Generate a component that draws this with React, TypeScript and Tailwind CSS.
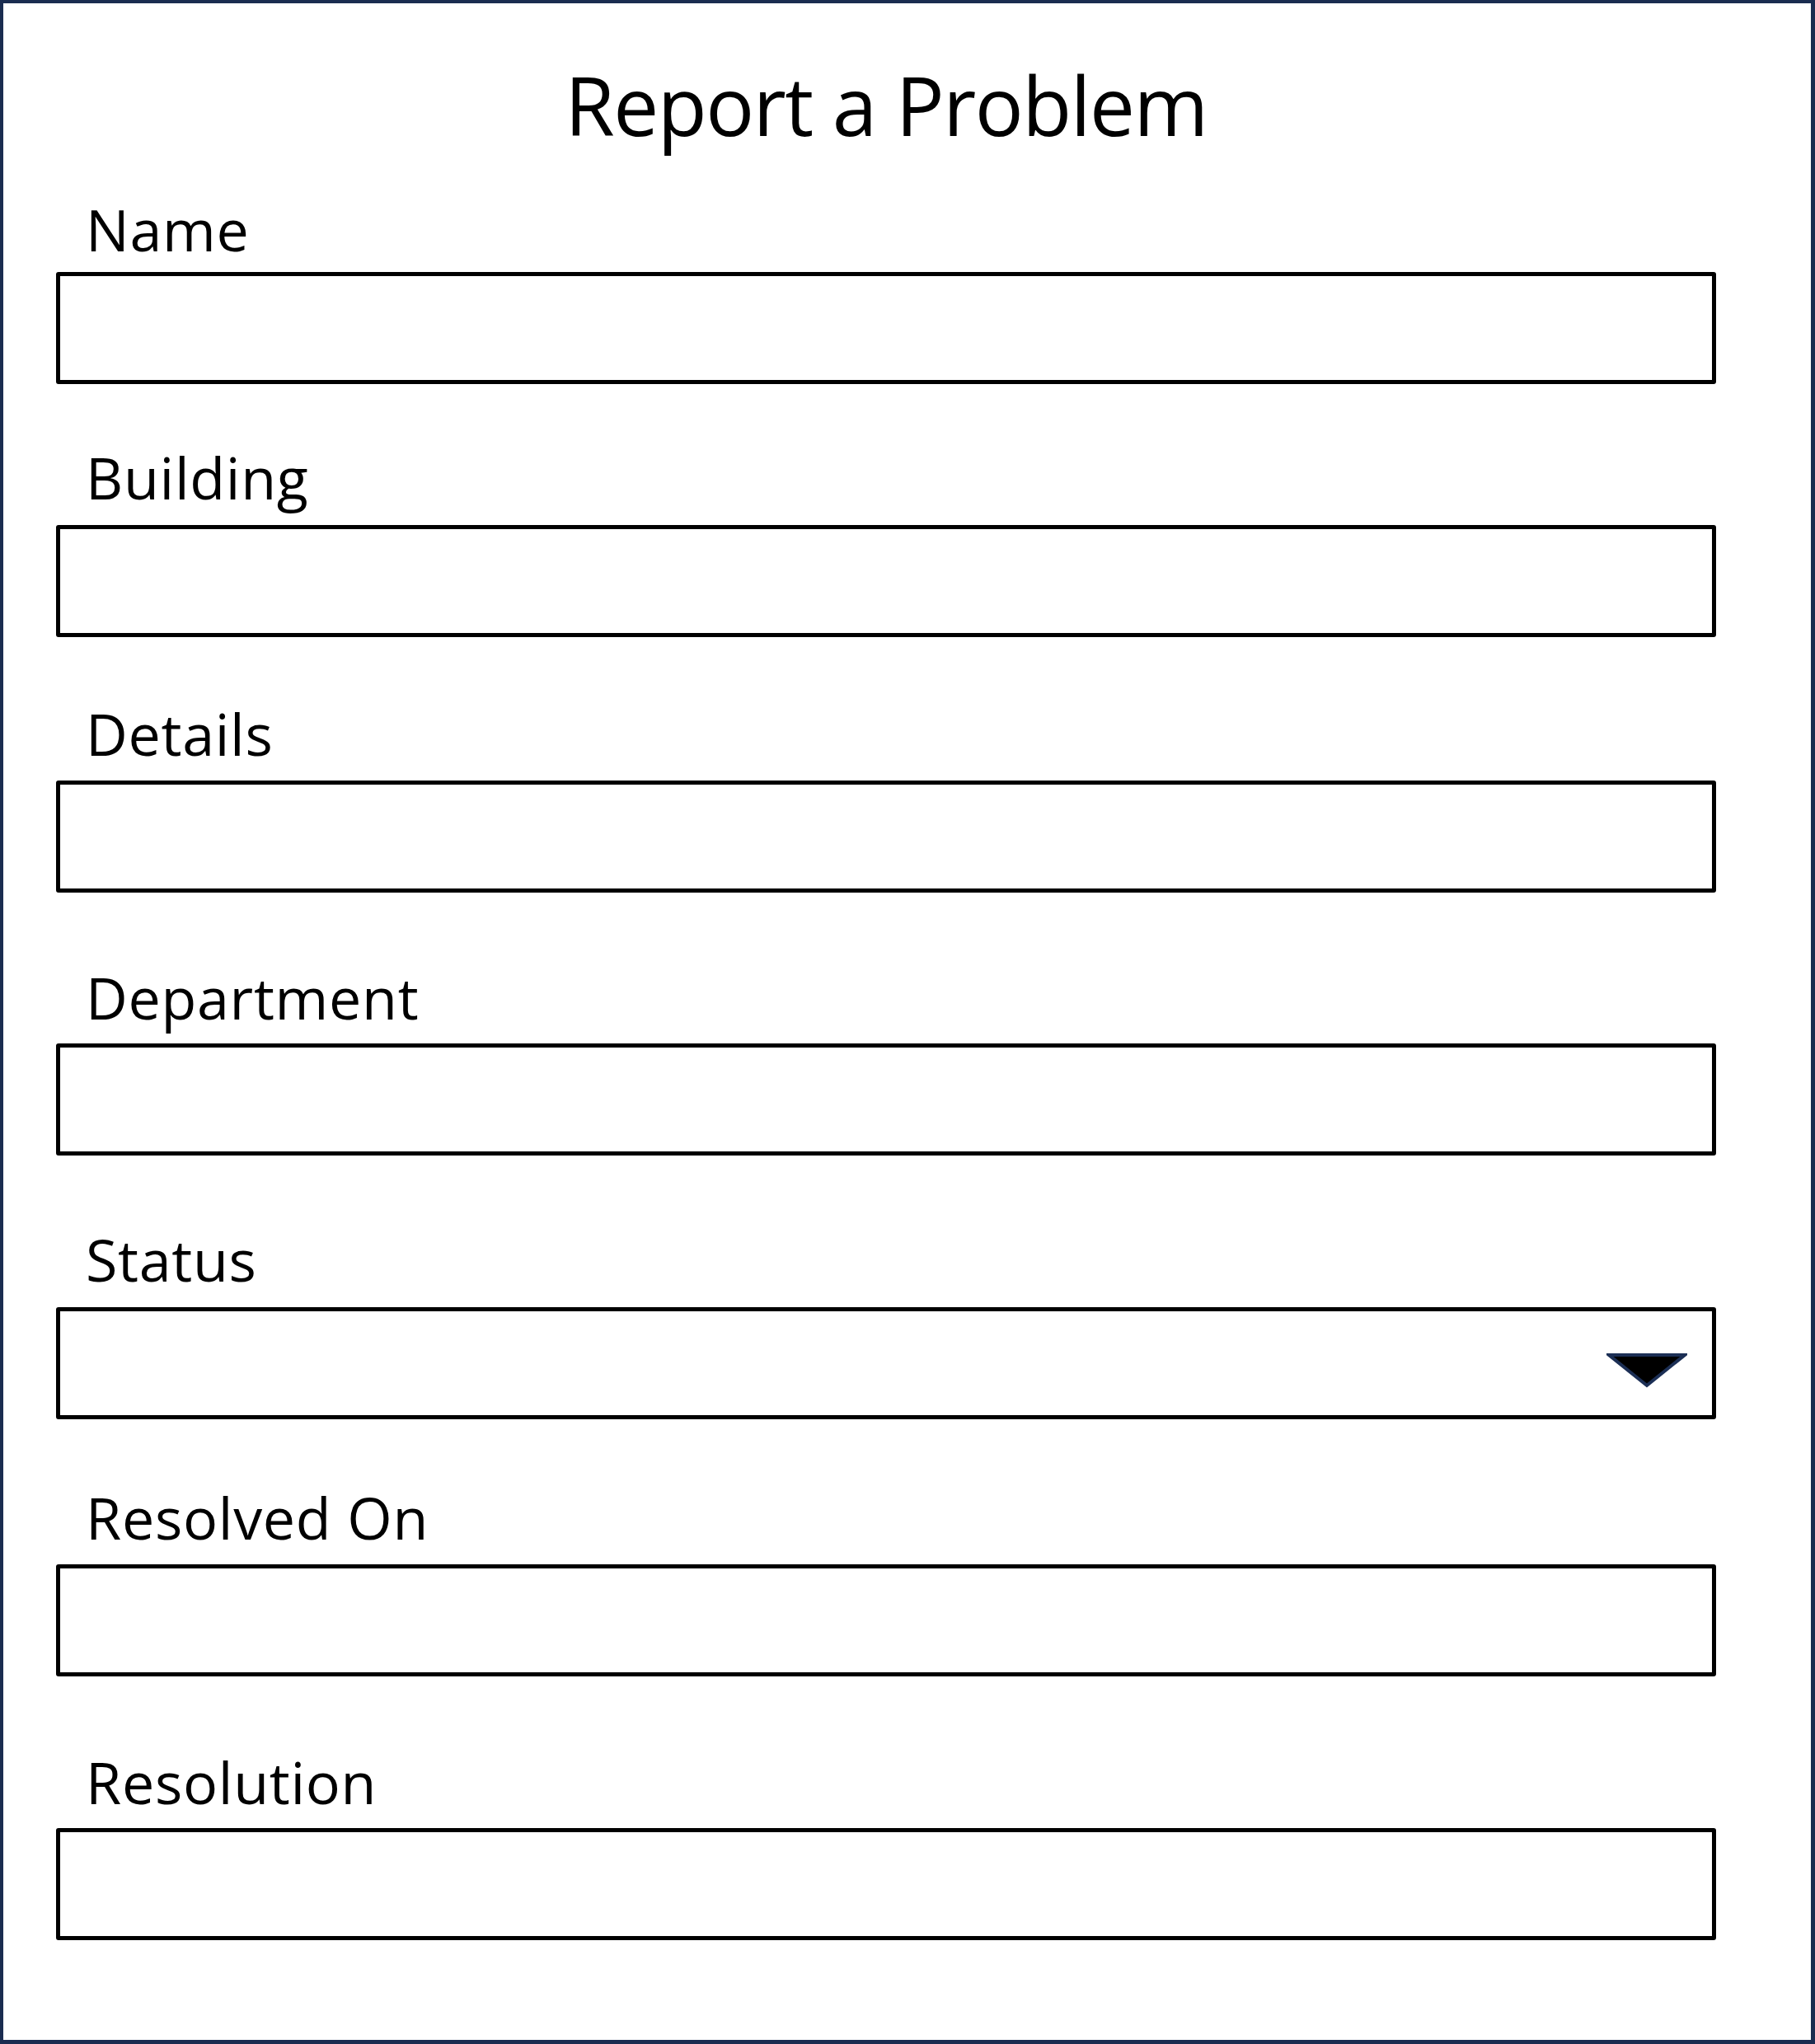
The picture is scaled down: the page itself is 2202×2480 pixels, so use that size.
const fields = [
  { label: "Name", top: "mt-[67px]", gap: "mt-[17px]" },
  { label: "Building", top: "mt-[78px]", gap: "mt-[23px]" },
  { label: "Details", top: "mt-[82px]", gap: "mt-[22px]" },
  { label: "Department", top: "mt-[92px]", gap: "mt-[21px]" },
  { label: "Status", top: "mt-[91px]", gap: "mt-[23px]", select: true },
  { label: "Resolved On", top: "mt-[84px]", gap: "mt-[22px]" },
  { label: "Resolution", top: "mt-[93px]", gap: "mt-[21px]" },
];

function DropdownArrow() {
  return (
    <svg width="98" height="44" viewBox="0 0 98 44">
      <polygon
        points="3,3 95,3 49,40"
        fill="#000"
        stroke="#1c2f55"
        strokeWidth="4"
        strokeLinejoin="miter"
      />
    </svg>
  );
}

export default function App() {
  return (
    <div className="w-[2202px] h-[2480px] bg-white border-l-4 border-t-4 border-r-[5px] border-b-[5px] border-[#1a2c50] font-['Open_Sans',sans-serif] text-black">
      <div className="ml-[64px] w-[2014px] pt-[74px]">
        <h1 className="text-center text-[98px] leading-none font-normal tracking-[-0.015em]">Report a Problem</h1>

        {fields.map((f) => (
          <div key={f.label} className={f.top}>
            <div className="pl-[36px] text-[70px] leading-[70px] tracking-[0.01em]">{f.label}</div>
            <div className={`${f.gap} h-[136px] border-[5px] border-black rounded-[3px]`}>
              {f.select && (
                <div className="flex justify-end pr-[30px] pt-[50px]">
                  <DropdownArrow />
                </div>
              )}
            </div>
          </div>
        ))}
      </div>
    </div>
  );
}
